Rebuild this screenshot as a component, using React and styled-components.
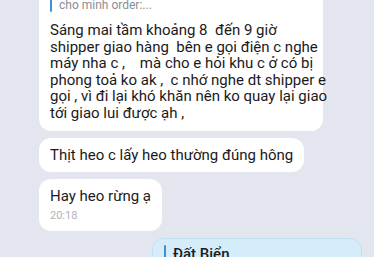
import React from "react"
import styled, { createGlobalStyle } from "styled-components"

const Global = createGlobalStyle`
    html, body {
        margin: 0;
        padding: 0;
        background: #e3e6ee;
        overflow: hidden;
    }
    body {
        font-family: Roboto, Inter, "Noto Sans", "Liberation Sans", sans-serif;
        -webkit-font-smoothing: antialiased;
    }
`

const Screen = styled.div`
    width: 374px;
    height: 257px;
    overflow: hidden;
    background: #e3e6ee;
`

const Thread = styled.div`
    display: flex;
    flex-direction: column;
    gap: 7px;
    margin-top: -23px;
    padding: 0 12px 0 39px;
`

const Bubble = styled.div`
    align-self: ${(p) => (p.$mine ? "flex-end" : "flex-start")};
    background: ${(p) => (p.$mine ? "#d5edfb" : "#ffffff")};
    border: ${(p) => (p.$mine ? "1px solid #c3dff2" : "none")};
    border-radius: 12px;
    padding: ${(p) => (p.$mine ? "6px 11px" : "9px 11px")};
    color: #1a1a1c;
    font-size: 15px;
    line-height: 16.6px;
    width: ${(p) => p.$width || "auto"};
    box-sizing: border-box;
`

const Quote = styled.div`
    display: flex;
    align-items: stretch;
    gap: 7px;
    margin-bottom: 10px;
`

const QuoteBar = styled.span`
    width: 2px;
    border-radius: 1px;
    background: #3d8fdc;
    flex-shrink: 0;
`

const QuoteText = styled.div`
    font-size: ${(p) => (p.$strong ? "15px" : "12px")};
    font-weight: ${(p) => (p.$strong ? 500 : 400)};
    color: ${(p) => (p.$strong ? "#1b1b1b" : "#8a8d93")};
    line-height: ${(p) => (p.$strong ? "18px" : "13px")};
`

const Body = styled.div`
    white-space: pre;
`

const Time = styled.div`
    font-size: 11px;
    line-height: 13px;
    color: #b1b3b8;
    margin-top: 4px;
`

const lines = [
    "Sáng mai tầm khoảng 8  đến 9 giờ",
    "shipper giao hàng  bên e gọi điện c nghe",
    "máy nha c ,    mà cho e hỏi khu c ở có bị",
    "phong toả ko ak ,  c nhớ nghe dt shipper e",
    "gọi , vì đi lại khó khăn nên ko quay lại giao",
    "tới giao lui được ạh ,",
]

const App = () => (
    <Screen>
        <Global />
        <Thread>
            <Bubble $width="284px">
                <Quote>
                    <QuoteBar />
                    <QuoteText>
                        Tuỳ Kiều
                        <br />
                        cho mình order:...
                    </QuoteText>
                </Quote>
                <Body>{lines.join("\n")}</Body>
            </Bubble>
            <Bubble>
                <Body>Thịt heo c lấy heo thường đúng hông</Body>
            </Bubble>
            <Bubble>
                <Body>Hay heo rừng ạ</Body>
                <Time>20:18</Time>
            </Bubble>
            <Bubble $mine $width="210px">
                <Quote>
                    <QuoteBar />
                    <QuoteText $strong>Đất Biển</QuoteText>
                </Quote>
            </Bubble>
        </Thread>
    </Screen>
)

export default App
